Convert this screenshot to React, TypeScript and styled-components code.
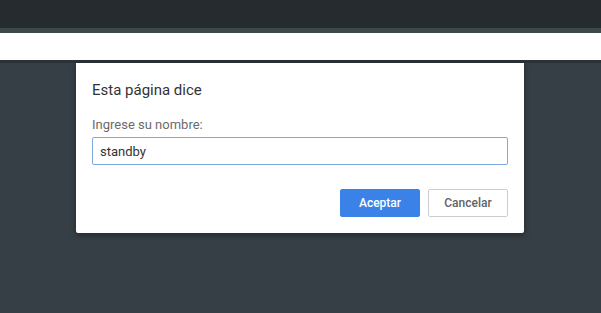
import styled, { createGlobalStyle } from 'styled-components';

const GlobalStyle = createGlobalStyle`
  html, body {
    margin: 0;
    padding: 0;
    background: #363f45;
  }
  body {
    font-family: Roboto, "Noto Sans", "Liberation Sans", sans-serif;
  }
`;

const App = () => (
  <>
    <GlobalStyle />
    <Page>
      <TopBar />
      <TabStrip />
      <AddressBar />
      <Divider />
      <Content>
        <Dialog role="dialog" aria-label="Esta página dice">
          <Title>Esta página dice</Title>
          <Label htmlFor="prompt">Ingrese su nombre:</Label>
          <Input id="prompt" defaultValue="standby" />
          <Actions>
            <Button primary>Aceptar</Button>
            <Button>Cancelar</Button>
          </Actions>
        </Dialog>
      </Content>
    </Page>
  </>
);

export default App;

const Page = styled.div`
  display: flex;
  flex-direction: column;
  width: 601px;
  height: 313px;
  overflow: hidden;
  background: #363f45;
`;

const TopBar = styled.div`
  height: 28px;
  background: #252b2e;
`;

const TabStrip = styled.div`
  height: 5px;
  background: #3e474b;
`;

const AddressBar = styled.div`
  height: 27px;
  background: #ffffff;
`;

const Divider = styled.div`
  height: 3px;
  background: #2c3236;
`;

const Content = styled.div`
  flex: 1;
  padding-left: 76px;
`;

const Dialog = styled.div`
  width: 448px;
  box-sizing: border-box;
  padding: 17px 16px 16px;
  background: #ffffff;
  border-radius: 0 0 2px 2px;
  box-shadow: 0 2px 6px rgba(0, 0, 0, 0.35);
  display: flex;
  flex-direction: column;
`;

const Title = styled.h1`
  margin: 0;
  font-size: 15px;
  line-height: 20px;
  font-weight: 400;
  color: #333333;
`;

const Label = styled.label`
  margin-top: 17px;
  font-size: 13px;
  line-height: 16px;
  color: #6b6b6b;
`;

const Input = styled.input`
  margin-top: 4px;
  height: 28px;
  box-sizing: border-box;
  width: 100%;
  padding: 0 7px;
  border: 1px solid #7eaadf;
  border-radius: 2px;
  outline: none;
  font-family: inherit;
  font-size: 13px;
  color: #333333;
  background: #ffffff;
`;

const Actions = styled.div`
  margin-top: 24px;
  display: flex;
  justify-content: flex-end;
  gap: 8px;
`;

const Button = styled.button<{ primary?: boolean }>`
  width: 80px;
  height: 28px;
  box-sizing: border-box;
  padding: 0;
  border-radius: 2px;
  font-family: inherit;
  font-size: 12px;
  font-weight: 500;
  cursor: pointer;
  border: 1px solid ${({ primary }) => (primary ? '#3b82e8' : '#cdcdcd')};
  background: ${({ primary }) => (primary ? '#3b82e8' : '#ffffff')};
  color: ${({ primary }) => (primary ? '#ffffff' : '#5f6368')};
`;
